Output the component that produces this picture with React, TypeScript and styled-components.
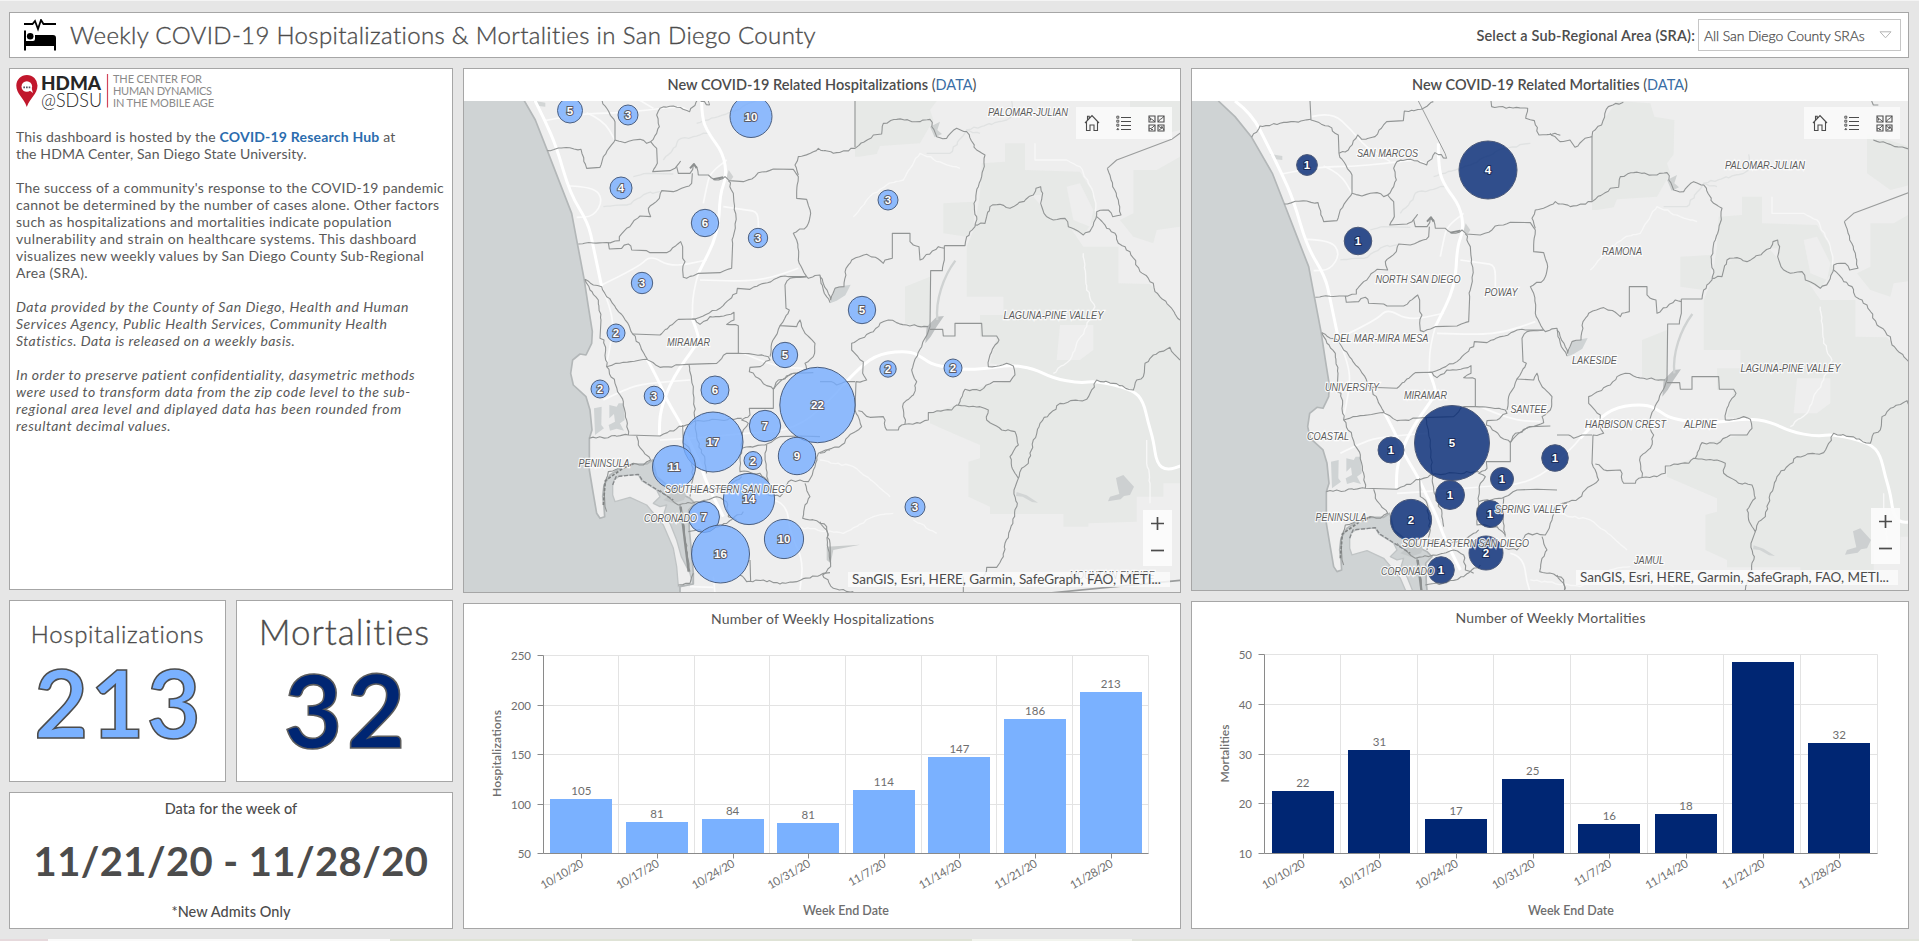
import React from "react";
import styled, { createGlobalStyle } from "styled-components";

const FONT = `Lato, "Open Sans", sans-serif`;
const BLUE = "#7ab1ff";
const NAVY = "#002673";

const Global = createGlobalStyle`
  html, body { margin: 0; padding: 0; }
  body { background: #e6e6e6; font-family: ${FONT}; color: #4c4c4c; overflow: hidden; }
  * { box-sizing: border-box; }
`;

const Page = styled.div`
  width: 1919px;
  height: 941px;
  display: flex;
  flex-direction: column;
  border-top: 1px solid #f4f4f4;
  background: #e6e6e6;
`;

const Panel = styled.section`
  background: #fff;
  border: 1px solid #a6a6a6;
`;

const Header = styled(Panel)`
  display: flex;
  align-items: center;
  height: 46px;
  margin: 11px 10px 10px 9px;
  padding: 0 7px 0 14px;
  flex: none;
`;

const Title = styled.h1`
  margin: 0 auto 0 13px;
  font-size: 24px;
  font-weight: 300;
  letter-spacing: 0.35px;
  line-height: 32px;
  padding-bottom: 1px;
  white-space: nowrap;
  -webkit-text-stroke: 0.35px currentColor;
`;

const SelectLabel = styled.label`
  font-size: 14.5px;
  font-weight: 600;
  letter-spacing: 0.16px;
  margin-right: 3px;
  white-space: nowrap;
`;

const Select = styled.div`
  width: 203px;
  height: 32px;
  border: 1px solid #c6c6c6;
  display: flex;
  align-items: center;
  justify-content: space-between;
  padding: 0 8px 0 5px;
  font-size: 14px;
  font-weight: 300;
  letter-spacing: -0.1px;
  white-space: nowrap;
  -webkit-text-stroke: 0.25px currentColor;
`;

const Body = styled.main`
  display: flex;
  gap: 10px;
  height: 861px;
  margin: 0 10px 0 9px;
  flex: none;
`;

const Column = styled.div<{ $w: number }>`
  width: ${(p) => p.$w}px;
  display: flex;
  flex-direction: column;
  gap: 10px;
`;

const About = styled(Panel)`
  height: 522px;
  padding: 4px 6px;
`;

const Paragraph = styled.p<{ $italic?: boolean }>`
  margin: 0 0 17px;
  font-size: 14px;
  font-weight: 400;
  font-style: ${(p) => (p.$italic ? "italic" : "normal")};
  color: #595959;
  line-height: 17px;
  white-space: nowrap;
`;

const Line = styled.span<{ $track: number }>`
  display: block;
  letter-spacing: ${(p) => p.$track}px;
`;

const HubLink = styled.a`
  color: #2b6cae;
  font-weight: 700;
`;

const StatRow = styled.div`
  display: flex;
  gap: 10px;
  height: 182px;
`;

const StatCard = styled(Panel)<{ $top: number }>`
  flex: 1;
  display: flex;
  flex-direction: column;
  align-items: center;
  padding-top: ${(p) => p.$top}px;
  overflow: hidden;
`;

const StatName = styled.div<{ $size: number; $track: number }>`
  font-size: ${(p) => p.$size}px;
  line-height: ${(p) => p.$size + 6}px;
  font-weight: 300;
  letter-spacing: ${(p) => p.$track}px;
  -webkit-text-stroke: 0.35px currentColor;
`;

const StatValue = styled.div<{ $size: number; $color: string; $track: number; $stroke: string }>`
  margin-top: 7px;
  font-size: ${(p) => p.$size}px;
  line-height: ${(p) => p.$size}px;
  font-weight: 700;
  color: ${(p) => p.$color};
  letter-spacing: ${(p) => p.$track}px;
  margin-right: -${(p) => p.$track}px;
  -webkit-text-stroke: 1.6px ${(p) => p.$stroke};
`;

const Week = styled(Panel)`
  height: 137px;
  display: flex;
  flex-direction: column;
  align-items: center;
  justify-content: space-between;
  padding: 6px 0 6px;
`;

const WeekNote = styled.div`
  font-size: 14.5px;
  font-weight: 500;
  line-height: 20px;
  letter-spacing: 0.06px;
`;

const WeekRange = styled.div`
  font-size: 40px;
  font-weight: 700;
  line-height: 48px;
  letter-spacing: 0.4px;
`;

const MapPanel = styled(Panel)<{ $h: number }>`
  height: ${(p) => p.$h}px;
  display: flex;
  flex-direction: column;
`;

const MapTitle = styled.h2`
  margin: 0;
  height: 32px;
  line-height: 31px;
  text-align: center;
  font-size: 14.5px;
  font-weight: 600;
  letter-spacing: 0.03px;
  flex: none;
`;

const DataLink = styled.span`
  font-weight: 400;
  a { color: #3a6ea5; }
`;

const MapView = styled.div`
  position: relative;
  flex: 1;
  overflow: hidden;
  svg { display: block; }
`;

const Tools = styled.div`
  position: absolute;
  top: 6px;
  right: 8px;
  width: 96px;
  height: 32px;
  display: flex;
  background: rgba(250, 250, 250, 0.92);
`;

const Tool = styled.button`
  width: 32px;
  height: 32px;
  border: 0;
  padding: 0;
  background: none;
  display: flex;
  align-items: center;
  justify-content: center;
`;

const ZoomBox = styled.div`
  position: absolute;
  right: 8px;
  bottom: 26px;
  width: 29px;
  height: 56px;
  padding-bottom: 2px;
  display: flex;
  flex-direction: column;
  align-items: center;
  justify-content: space-around;
  background: rgba(251, 251, 251, 0.95);
`;

const Attribution = styled.div`
  position: absolute;
  right: 10px;
  bottom: 5px;
  width: 322px;
  height: 15px;
  padding-left: 4px;
  line-height: 15px;
  font-size: 13.5px;
  letter-spacing: -0.03px;
  white-space: nowrap;
  background: rgba(250, 250, 250, 0.85);
`;

const ChartPanel = styled(Panel)`
  flex: 1;
  min-height: 0;
  svg { display: block; }
`;

const Footer = styled.footer`
  display: flex;
  height: 2px;
  margin-top: 10px;
`;

const Strip = styled.div<{ $w: number; $c: string }>`
  width: ${(p) => p.$w}px;
  background: ${(p) => p.$c};
`;

/* ---------- geography ---------- */

type Pt = [number, number];

const parse = (s: string, dx = 0, dy = 0): Pt[] =>
  s.trim().split(/\s+/).map((p) => {
    const [x, y] = p.split(",").map(Number);
    return [x + dx, y + dy] as Pt;
  });

const noise = (x: number, y: number) => {
  const v = Math.sin(x * 12.9898 + y * 78.233) * 43758.5453;
  return (v - Math.floor(v)) * 2 - 1;
};

/* Adds small survey-line irregularities; axis-aligned legs stay straight. */
const rough = (pts: Pt[], amp: number) => {
  let d = `M${pts[0][0]} ${pts[0][1]}`;
  for (let i = 1; i < pts.length; i++) {
    const [x0, y0] = pts[i - 1];
    const [x1, y1] = pts[i];
    const len = Math.hypot(x1 - x0, y1 - y0);
    const straight = Math.abs(x1 - x0) < 4 || Math.abs(y1 - y0) < 4;
    const n = straight ? 1 : Math.max(1, Math.round(len / 11));
    for (let k = 1; k < n; k++) {
      const t = k / n;
      const x = x0 + (x1 - x0) * t;
      const y = y0 + (y1 - y0) * t;
      d += `L${(x + noise(x, y) * amp).toFixed(1)} ${(y + noise(y, x) * amp).toFixed(1)}`;
    }
    d += `L${x1} ${y1}`;
  }
  return d;
};

const NW: string[] = [
  "339,-37 342,20 394,38 424,65 426,120 465,185 465,240 430,290 420,322 380,325 363,268 295,264 262,272",
  "164,72 189,38 249,30 342,18",
  "426,120 454,110 482,65 494,78 534,70 569,25 619,22 622,-7 672,-12 709,-35",
  "882,-37 884,-20 992,-15 986,15 1012,22 1026,65 1074,60 1090,66",
  "465,240 495,248 520,240 540,238 560,250 572,245 590,265 592,310 578,335 630,332 645,325 662,303",
  "650,320 655,340 690,340 700,315 710,320 715,345 745,345 765,360 795,350 808,362 850,365 885,350 895,338 940,327 1000,328 1015,350 1010,395 1010,415 1040,418 1052,460 1040,500 1000,520 1010,540 1015,600 1040,650",
  "572,245 590,220 598,200 590,165 600,145 640,138 689,155 714,118 749,135",
  "697,340 695,370 665,385 640,395 605,392 598,415 565,445 572,470 540,468 500,505 478,530 478,542 440,548 355,552",
  "445,548 448,567 485,565 505,552 515,570 560,572 570,578 620,578 662,545 668,560 668,595 675,605 668,630 670,652 680,655 715,640 780,638 815,625 818,550 828,470 820,400 805,362",
  "1015,345 1005,315 1015,290 1060,275 1075,265 1090,272",
  "697,777 705,777 780,745 830,700 832,685 870,688 950,655 975,648 985,650 1040,650",
  "375,658 400,675 425,680 440,710 490,770 518,822 562,898",
  "375,658 390,690 415,720 423,780 420,835 432,840 440,920 465,970 490,1025 500,1080 505,1125",
  "518,822 600,825 655,778 705,777 720,793 750,770 800,765 822,757 822,780 800,793 835,797 835,880",
  "1040,650 990,655 975,675 978,745 988,750 960,797 1010,800 1020,780 1030,810 1065,850 1060,890 1035,910 1040,928 990,945 965,960 940,988",
  "960,797 935,850 930,890",
  "1040,650 1045,655 1080,645 1090,690 1110,728",
];

const NE: string[] = [
  "-21,60 9,85 39,80 54,102 84,75 105,70 107,55 134,35 154,-20 199,-33",
  "105,70 105,262",
  "10,272 40,280 105,265 160,225 185,222 190,190 230,178 300,185 330,178 350,230 380,235 410,205 440,215 470,270 495,285 485,350 475,380 462,430 470,470 465,500 440,530 435,557 373,557",
  "465,495 495,490 510,440 540,433 570,445 640,405 648,385 662,380 668,400 662,430 672,460 700,480 735,475 745,500 790,525 815,505 830,465 830,455 865,450 878,470 903,465 895,420 878,380 862,325",
  "830,470 860,505 885,520 895,550 930,575 960,635 1000,670 1005,695 1050,740 1080,780",
  "373,557 373,600 367,632 332,632 330,800 318,830 275,930 290,965 280,1005 250,1030 255,1092",
  "373,565 355,560 300,600 297,560 280,555 270,545 270,520 217,520 217,595 195,600 190,610 175,597 140,583 95,600 78,625 72,680 45,685 32,720 0,650",
  "325,800 260,795 205,780 180,790 160,815 95,850 95,870 130,905 128,940 140,960 108,965 105,1050 125,1100 85,1130 65,1155 0,1180",
  "330,808 368,808 370,828 405,828 405,790 485,790 487,828 530,828 537,840 525,855 510,885 505,920 560,910 580,918 585,945 570,965 520,965 480,992 435,988 415,1035",
  "944,-37 949,-25 964,-25",
  "949,80 989,90 1014,100 1060,107",
];

const SW: string[] = [
  "440,110 490,97 560,88 600,112 680,103 770,100 800,70 835,70 925,80 930,90 900,110 870,112 868,125 940,178 940,235 868,235 870,255 845,270 865,280 850,300 845,355",
  "687,103 700,170 705,268 712,330 735,390 740,430",
  "388,325 505,315 600,318 700,275 845,265",
  "530,318 535,345 572,390 550,405 520,400 445,425 432,470 435,530 440,545",
  "668,285 670,340 690,360 700,440 690,500",
  "845,355 915,345 960,320 1020,318 1080,320",
  "920,345 915,370 925,460",
  "845,355 840,425 900,430 925,455",
  "1110,360 1075,370 1065,410 1045,455 1020,450 985,455 960,500 925,495",
  "1035,460 1050,500 1035,525 1028,565 1070,572 1100,590 1108,680 1112,700",
  "600,480 655,525 740,510 770,500 800,515 805,560 830,570",
  "660,525 690,725",
  "685,605 740,600 800,580 850,545",
  "655,765 690,760 700,730",
  "840,735 860,755 910,750 960,762 1010,755 1090,730 1110,728",
  "870,690 872,755",
  "940,178 955,150 1000,130 1060,128",
  "845,440 800,470 730,480 700,470",
];

const SE: string[] = [
  "115,242 150,262 190,260 200,300 235,300 245,285 300,280 325,270 325,248 395,240 410,225 480,230 505,240 500,270 545,300 585,305 595,345 570,380 575,410 595,445 605,415 625,400 640,330 660,280 720,220 800,208 815,180 830,150 880,160 940,180 950,150 970,140 975,100 1000,75 1050,52 1080,90",
  "595,445 582,480 592,520 570,600 555,640 550,680 530,712 500,712 490,740",
  "0,575 20,600 30,640 32,710 8,735 40,775 100,785",
  "430,740 430,790",
  "0,155 35,155 50,165 75,155 105,155",
];

const COAST =
  "64,-37 114,10 164,72 226,180 262,272 300,370 335,460 352,550 372,655 385,740 397,815 395,850 378,885 360,882 338,900 332,940 340,975 378,1010 390,1050 396,1110 388,1135 388,1230 398,1290 410,1360 420,1375 434,1370 432,1340 428,1310 432,1275 450,1245 480,1225 520,1212 560,1212 578,1200 590,1250 640,1290 690,1315 705,1330 686,1350 688,1410 695,1480 700,1540 700,1572 660,1580 660,1640";

const CORONADO =
  "458,1275 462,1260 480,1247 535,1244 545,1262 590,1290 600,1310 580,1330 600,1340 620,1335 612,1360 630,1390 650,1440 664,1490 690,1540 698,1572 655,1580 650,1520 640,1465 610,1395 560,1335 510,1312 465,1325 458,1305";

const PARKS = [
  "105,70 180,-37 280,-30 292,10 352,20 350,123 330,150 340,180 300,250 180,258 170,282 120,290 105,290",
  "485,310 555,305 555,250 615,250 615,330 780,335 820,400 830,470 790,525 745,505 672,470 662,405 640,405 570,445 510,440 495,490 465,495 480,400",
  "440,665 440,560 465,500 510,445 640,410 700,480 735,480 790,560 895,560 895,670 990,672 1080,780 1080,1270 1030,1270 1030,1310 950,1310 950,1385 805,1390 805,1400 730,1400 730,1362 510,1362 510,1340 445,1310 445,1205 480,1195 480,1155 410,1125 330,1090 330,1060 410,1035 440,990 580,960 585,920 510,910 530,830 480,830 480,765 550,765 550,710 440,710",
  "930,60 1080,107 1080,210 1000,230 930,180",
  "940,330 1010,330 1080,290 1080,500 1010,510 1000,550 940,530 900,480 940,460",
  "255,680 330,650 330,810 255,790",
  "370,430 460,425 462,500 440,530 370,520",
];

const FREEWAYS = [
  "114,-37 164,0 214,100 254,180 290,262 330,400 385,490 400,560 425,680",
  "724,90 724,170 745,220 790,280 800,350 780,400 775,520 715,640",
  "697,777 718,830 712,850 640,950 600,1050 598,1125",
  "562,898 600,970 620,1020 665,1095 690,1150 720,1210 740,1270 790,1370",
];

const ROADS = [
  "425,680 460,760 455,840 440,910",
  "425,675 540,620 570,585 635,622 740,600",
  "720,660 840,665 930,655 1015,625",
  "254,182 364,160 464,160 564,150 664,138 689,155",
  "344,10 404,-5 464,50 504,100 580,145",
  "430,1020 500,985 560,970 690,960",
  "600,1140 700,1135 850,1120 1010,1110 1130,1000 1160,960",
  "730,430 740,380 750,340 800,300",
  "380,158 430,180 465,240",
  "330,378 400,380 430,420 400,470 350,472",
  "790,440 860,450 895,455 895,520",
  "715,640 698,700 697,777",
  "940,1320 980,1330 990,1420 1030,1500 1020,1590",
  "760,1550 765,1600",
  "850,880 940,920 1030,925",
  "690,1580 760,1582",
];

const FAINT = [
  "745,220 700,230 655,240 640,265 610,300",
  "710,190 830,150 905,110 1000,90",
  "430,440 500,435 560,400 600,395",
  "520,350 560,340 640,342",
  "1400,280 1470,280 1520,210 1560,220",
  "1520,210 1640,180 1660,165 1655,123",
  "1725,250 1725,300 1820,300 1860,320 1900,400 1910,460",
  "1870,580 1880,690 1905,740 1880,800 1850,850 1830,900 1780,940",
  "1180,470 1240,400 1280,375 1330,360 1380,280 1450,310 1500,325",
  "1000,1400 1150,1420 1240,1370 1300,1360",
  "1360,1380 1430,1420",
  "1080,1200 1180,1220 1290,1310",
  "2060,1140 2060,1210 2070,1270 2070,1330",
];

const line = (pts: Pt[]) => "M" + pts.map((p) => p.join(" ")).join("L");

const curve = (pts: Pt[]) => {
  let d = `M${pts[0][0]} ${pts[0][1]}`;
  for (let i = 1; i < pts.length - 1; i++) {
    const mx = (pts[i][0] + pts[i + 1][0]) / 2;
    const my = (pts[i][1] + pts[i + 1][1]) / 2;
    d += `Q${pts[i][0]} ${pts[i][1]} ${mx} ${my}`;
  }
  const l = pts[pts.length - 1];
  return d + `L${l[0]} ${l[1]}`;
};

const borders = [
  ...NW.map((s) => parse(s)),
  ...NE.map((s) => parse(s, 1080, 0)),
  ...SW.map((s) => parse(s, 0, 810)),
  ...SE.map((s) => parse(s, 1080, 810)),
].map((p) => rough(p, 3.2));

function Geography() {
  return (
    <g transform="translate(460 60) scale(0.33333)" fill="none" strokeLinejoin="round">
      <path d={line(parse(COAST)) + "L2400 1640L2400 -120L20 -120Z"} fill="#eeeeee" />
      {PARKS.map((s, i) => (
        <path key={i} d={line(parse(s, 1080, 0)) + "Z"} fill="#e7e9e7" />
      ))}
      <path d={line(parse("1800,795 1900,795 1900,870 1860,900 1790,900")) + "Z"} fill="#eeeeee" />
      <path d={line(parse("1820,380 1860,370 1900,450 1890,500 1840,480")) + "Z"} fill="#eeeeee" />
      <path d={line(parse(CORONADO)) + "Z"} fill="#eeeeee" stroke="#c0c4c5" strokeWidth={4} />
      <path d={line(parse(COAST))} stroke="#b3b7b8" strokeWidth={5} />
      <path d={line(parse("402,1045 425,1040 424,1095 432,1105 405,1125")) + "Z"} fill="#cfd3d4" />
      <path
        d="M448 1035L470 1040L476 1030L492 1030L494 1080L480 1090L492 1112L470 1106L450 1112L446 1095L465 1085L462 1062L448 1075Z"
        fill="#cfd3d4"
      />
      <path d="M1968 1254L1990 1245L2022 1280L2010 1305L1992 1308L1982 1318L1944 1324L1950 1310L1978 1302L1972 1275Z" fill="#cdd0d1" />
      <path d="M1670 1296L1700 1306L1734 1328L1716 1326L1688 1310L1668 1308Z" fill="#d2d5d5" />
      <path d="M1110 730L1126 682L1172 674L1156 706L1130 722Z" fill="#cfd3d4" />
      <path d="M1396 850L1400 800L1430 770L1452 768L1430 800L1412 830Z" fill="#bfc2c3" />
      <path d="M1410 200L1440 185L1432 210L1446 222L1424 232Z" fill="#cfd2d2" />
      <path d="M1100 1460L1200 1454L1120 1470L1112 1510L1100 1500Z" fill="#c9cccc" />
      <path d="M655 1285L680 1300L672 1320L640 1330L610 1320Z" fill="#c4c8c9" />
      <path d="M218 122L256 128L256 140L236 138Z" fill="#d2d5d5" />
      <path d="M806 330L820 350L812 362L800 352Z" fill="#d0d2d2" />
      <path d="M1432 780C1426 720 1450 650 1486 602" stroke="#cfd2d2" strokeWidth={7} />
      {FAINT.map((s, i) => (
        <path key={i} d={rough(parse(s), 3)} stroke={i < 6 ? "#e0e2e2" : "#f7f7f7"} strokeWidth={4} />
      ))}
      {ROADS.map((s, i) => (
        <path key={i} d={curve(parse(s))} stroke="#fafafa" strokeWidth={5} />
      ))}
      {FREEWAYS.map((s, i) => (
        <path key={i} d={curve(parse(s))} stroke="#ffffff" strokeWidth={9} />
      ))}
      <path
        d={curve(
          parse(
            "1150,975 1200,920 1260,880 1350,872 1390,895 1420,915 1510,930 1580,925 1650,915 1720,925 1780,955 1860,970 1910,962 2020,990 2050,1025 2065,1090 2080,1140 2090,1210 2120,1232 2170,1215"
          )
        )}
        stroke="#ffffff"
        strokeWidth={9}
      />
      {borders.map((d, i) => (
        <path key={i} d={d} stroke="#929595" strokeWidth={3.3} />
      ))}
      <path d="M664 -37L744 120L749 135" stroke="#9a9c9c" strokeWidth={3} />
      <path d="M1942 325L1970 300L2135 238L2180 205" stroke="#9a9c9c" strokeWidth={3.4} />
      <path d="M690 325L702 312L710 325M760 358L790 352" stroke="#8d9090" strokeWidth={6} />
      <path d="M662 1340L686 1535" stroke="#8b8e8e" strokeWidth={7} />
      <path d="M430 1335L436 1262L490 1224L520 1212" stroke="#7f8282" strokeWidth={5} strokeDasharray="9 5" />
      <path d="M458 1275L468 1250L535 1243L548 1262L640 1320" stroke="#85888a" strokeWidth={4} strokeDasharray="12 5" />
      <path d="M1760 1600L2170 1560" stroke="#9a9c9c" strokeWidth={5} />
    </g>
  );
}

type Bubble = [number, number, number, number];
type Label = [string, number, number, number];

const HOSP: Bubble[] = [
  [570, 110.5, 12.5, 5], [628, 115, 10, 3], [751, 116.5, 21, 10], [621, 188, 11, 4], [705, 223, 13.7, 6],
  [758, 238, 9.7, 3], [642, 283, 10.7, 3], [616, 333, 9, 2], [888, 200, 10, 3], [862, 310, 13.7, 5],
  [600, 389, 9, 2], [654, 396, 9.8, 3], [715, 390, 14, 6], [785, 355, 12.7, 5], [817.5, 405, 37.7, 22],
  [713, 442, 30, 17], [765, 426, 15.7, 7], [797, 456, 18.7, 9], [753, 460.5, 9, 2], [674, 467, 21.5, 11],
  [749, 499, 25.6, 14], [704, 517, 15.5, 7], [720.5, 554, 29, 16], [784, 539, 19.6, 10], [888, 369, 8.2, 2],
  [953, 368, 9, 2], [915, 507, 10, 3],
];

const MORT: Bubble[] = [
  [1307, 165, 10.4, 1], [1488, 170, 29, 4], [1358, 241, 13.8, 1], [1391, 450, 13, 1], [1452, 443, 37.5, 5],
  [1450, 495, 14.5, 1], [1502, 479, 11.5, 1], [1490, 514, 13.5, 1], [1411, 520, 20.6, 2], [1486, 553, 17, 2],
  [1441, 570, 13.3, 1], [1555, 458, 13.3, 1],
];

const HOSP_LABELS: Label[] = [
  ["PALOMAR-JULIAN", 1028, 112, 80], ["LAGUNA-PINE VALLEY", 1053.5, 315, 100], ["MIRAMAR", 688.5, 342, 43],
  ["PENINSULA", 604, 463, 51], ["SOUTHEASTERN SAN DIEGO", 728.5, 489, 127], ["CORONADO", 670.5, 518, 53],
  ["MOUNTAIN EMPIRE", 1112, 575, 85],
];

const MORT_LABELS: Label[] = [
  ["SAN MARCOS", 1387.5, 153, 61], ["NORTH SAN DIEGO", 1418, 279, 85], ["POWAY", 1501, 292, 33],
  ["DEL MAR-MIRA MESA", 1381, 338, 95], ["UNIVERSITY", 1352, 387, 54], ["MIRAMAR", 1425.5, 395.5, 43],
  ["SANTEE", 1528.5, 409, 36], ["COASTAL", 1328, 436, 42], ["PENINSULA", 1341, 517, 51],
  ["SPRING VALLEY", 1531, 509, 72], ["SOUTHEASTERN SAN DIEGO", 1465.5, 543, 127], ["CORONADO", 1407.5, 571, 53],
  ["PALOMAR-JULIAN", 1765, 165, 80], ["RAMONA", 1622, 251, 40], ["LAKESIDE", 1594.5, 360, 45],
  ["LAGUNA-PINE VALLEY", 1790.5, 368, 100], ["HARBISON CREST", 1625.5, 424, 81], ["ALPINE", 1700.5, 424, 33],
  ["JAMUL", 1649, 560, 30],
];

const Place = styled.text`
  font: italic 10.67px "Liberation Sans", Arial, sans-serif;
  fill: #5c5c5c;
  stroke: rgba(255, 255, 255, 0.85);
  stroke-width: 2.4px;
  paint-order: stroke;
  text-anchor: middle;
`;

const Count = styled.text<{ $halo: string }>`
  font: bold 11.5px "Liberation Sans", Arial, sans-serif;
  fill: #fff;
  stroke: ${(p) => p.$halo};
  stroke-width: 2px;
  paint-order: stroke;
  text-anchor: middle;
`;

interface MapProps {
  h: number;
  left: number;
  shift: Pt;
  bubbles: Bubble[];
  labels: Label[];
  fill: string;
  stroke: string;
  halo: string;
}

const HomeIcon = () => (
  <svg width="16" height="18" viewBox="0 0 16 18" fill="none" stroke="#4c4c4c" strokeWidth="1.1">
    <path d="M1 9L8 1.6L15 9M2.5 8V16.5H6V11H10V16.5H13.5V8M3.5 6V2.2H5.2V4.3" />
  </svg>
);

const LegendIcon = () => (
  <svg width="16" height="16" viewBox="0 0 16 16" fill="none" stroke="#4c4c4c">
    <path d="M5 2.5H15M5 6.5H15M5 10.5H15M5 14.5H15" strokeWidth="1.1" />
    <path d="M.8 1.2h2v2h-2zM.8 5.2h2v2h-2zM.8 9.2h2v2h-2zM.8 14.6h2L1.8 13.2z" strokeWidth=".9" />
  </svg>
);

const BasemapIcon = () => (
  <svg width="17" height="17" viewBox="0 0 17 17" fill="none" stroke="#4c4c4c" strokeWidth="1.1">
    <path d="M1 1h6v6H1zM10 1h6v6h-6zM1 10h6v6H1zM10 10h6v6h-6z" />
    <path d="M1 2l3 2.500l1 .5l2 2M2.500 5.500v-2M16 1l-2 2.500l-1.500 .5L10 7M1 14l3-1l3-3M3 14.500h2M10 10l2 2.500l2-.5l2 3M14 11v2l-3 2" strokeWidth=".9" />
  </svg>
);

function CountyMap({ h, left, shift, bubbles, labels, fill, stroke, halo }: MapProps) {
  return (
    <MapView>
      <svg width="716" height={h} viewBox={`${left} 101 716 ${h}`}>
        <rect x={left} y="101" width="716" height={h} fill="#cfd3d4" />
        <g transform={`translate(${shift[0]} ${shift[1]})`}>
          <Geography />
        </g>
        {bubbles.map(([x, y, r], i) => (
          <circle key={i} cx={x} cy={y} r={r} fill={fill} fillOpacity={0.8} stroke={stroke} strokeWidth={1} />
        ))}
        {labels.map(([t, x, y, w], i) => (
          <Place key={i} x={x} y={y + 3.8} textLength={w} lengthAdjust="spacingAndGlyphs">{t}</Place>
        ))}
        {bubbles.map(([x, y, , n], i) => (
          <Count key={i} x={x} y={y + 4} $halo={halo}>{n}</Count>
        ))}
      </svg>
      <Tools>
        <Tool><HomeIcon /></Tool>
        <Tool><LegendIcon /></Tool>
        <Tool><BasemapIcon /></Tool>
      </Tools>
      <ZoomBox>
        <svg width="13" height="13" viewBox="0 0 13 13" stroke="#4c4c4c" strokeWidth="1.7"><path d="M0 6.500H13M6.500 0V13" /></svg>
        <svg width="13" height="13" viewBox="0 0 13 13" stroke="#4c4c4c" strokeWidth="1.7"><path d="M0 6.500H13" /></svg>
      </ZoomBox>
      <Attribution>SanGIS, Esri, HERE, Garmin, SafeGraph, FAO, METI...</Attribution>
    </MapView>
  );
}

/* ---------- charts ---------- */

const WEEKS = ["10/10/20", "10/17/20", "10/24/20", "10/31/20", "11/7/20", "11/14/20", "11/21/20", "11/28/20"];

const Txt = styled.text<{ $s: number; $w?: number; $c?: string }>`
  font-family: ${FONT};
  font-size: ${(p) => p.$s}px;
  font-weight: ${(p) => p.$w ?? 400};
  fill: ${(p) => p.$c ?? "#6e6e6e"};
`;

interface ChartProps {
  title: string;
  titleY: number;
  titleW: number;
  axis: string;
  axisX: number;
  axisW: number;
  left: number;
  top: number;
  h: number;
  x0: number;
  x1: number;
  y0: number;
  ticks: number[];
  data: { v: number; top: number; label?: boolean }[];
  color: string;
}

function BarChart(p: ChartProps) {
  const base = 853.5;
  const cell = (p.x1 - p.x0) / 8;
  const ty = (i: number) => Math.floor(base - ((base - p.y0) * i) / (p.ticks.length - 1)) + 0.5;
  return (
    <svg width="716" height={p.h} viewBox={`${p.left} ${p.top} 716 ${p.h}`}>
      <Txt $s={14} $c="#555" x={p.left + 358.5} y={p.titleY} textAnchor="middle" textLength={p.titleW}>{p.title}</Txt>
      {p.ticks.map((t, i) => (
        <g key={t}>
          <path d={`M${p.x0} ${ty(i)}H${p.x1}`} stroke="#e3e3e3" />
          <path d={`M${p.x0 - 6} ${ty(i)}H${p.x0}`} stroke="#8a8a8a" />
          <Txt $s={11.5} x={p.x0 - 12.5} y={ty(i) + 4} textAnchor="end">{t}</Txt>
        </g>
      ))}
      {WEEKS.map((w, i) => {
        const d = p.data[i];
        const cx = p.x0 + cell * (i + 0.5);
        const gx = Math.round(p.x0 + cell * (i + 1)) - 0.5;
        return (
          <g key={w}>
            <path d={`M${gx} ${p.y0}V${base}`} stroke="#e3e3e3" />
            <rect x={Math.round(cx - 31)} y={d.top} width={62} height={base - d.top} fill={p.color} />
            {d.label !== false && (
              <Txt $s={11.5} x={cx} y={d.top - 4} textAnchor="middle">{d.v}</Txt>
            )}
            <path d={`M${Math.round(cx) + 0.5} ${base}v5`} stroke="#8a8a8a" />
            <Txt $s={11.5} textAnchor="end" transform={`translate(${cx + 3} 866) rotate(-30)`} textLength={w.length > 7 ? 47 : 41}>{w}</Txt>
          </g>
        );
      })}
      <path d={`M${p.x0} ${p.y0}V${base}H${p.x1}`} fill="none" stroke="#8a8a8a" />
      <Txt $s={12} $w={600} textAnchor="middle" transform={`translate(${p.axisX} 753.5) rotate(-90)`} textLength={p.axisW}>{p.axis}</Txt>
      <Txt $s={12.5} $w={600} x={(p.x0 + p.x1) / 2} y={915} textAnchor="middle" textLength={86}>Week End Date</Txt>
    </svg>
  );
}

const BedIcon = () => (
  <svg width="33" height="32" viewBox="0 0 33 32">
    <path d="M0 5H8.500L11 2L14 10L17 1L19.500 5H32" fill="none" stroke="#000" strokeWidth="1.800" />
    <path d="M0 11.500H2V23H30V22H32V31.500H30V27H2V31.500H0ZM11 16H29Q32 16 32 19V24H2V22H9Q11 22 11 20Z" fill="#000" />
    <circle cx="6.200" cy="17.200" r="3.300" fill="#000" />
  </svg>
);

const Logo = styled.svg`
  display: block;
  margin-bottom: 17px;
`;

function HdmaLogo() {
  return (
    <Logo width="204" height="38" viewBox="16 73 204 38">
      <path d="M26.800 107C24 98 16.300 94 16.300 85.500A10.600 10.600 0 0 1 37.500 85.500C37.500 94 30 98 26.800 107Z" fill="#c1172c" />
      <circle cx="26.800" cy="86.500" r="5.300" fill="#fff" />
      <path d="M29 90L33 93L31.500 88Z" fill="#fff" />
      <path d="M23.300 87.300H30.300" stroke="#556" strokeWidth="1.800" strokeDasharray="1.700 1" />
      <Txt $s={18.5} $w={900} $c="#262626" x="41" y="89.500" textLength="60" lengthAdjust="spacingAndGlyphs">HDMA</Txt>
      <Txt $s={19} $w={300} $c="#222" x="41" y="107" textLength="61" lengthAdjust="spacingAndGlyphs">@SDSU</Txt>
      <path d="M107.500 74V107.500" stroke="#d3455a" strokeWidth="1.200" />
      <Txt $s={11} $c="#8a8a8a" x="113" y="82.700" textLength="89">THE CENTER FOR</Txt>
      <Txt $s={11} $c="#8a8a8a" x="113" y="95" textLength="99">HUMAN DYNAMICS</Txt>
      <Txt $s={11} $c="#8a8a8a" x="113" y="107.300" textLength="101">IN THE MOBILE AGE</Txt>
    </Logo>
  );
}

export default function App() {
  return (
    <Page>
      <Global />
      <Header>
        <BedIcon />
        <Title>Weekly COVID-19 Hospitalizations &amp; Mortalities in San Diego County</Title>
        <SelectLabel>Select a Sub-Regional Area (SRA):</SelectLabel>
        <Select>
          All San Diego County SRAs
          <svg width="13" height="8" viewBox="0 0 13 8"><path d="M1 .8H12L6.500 6.800Z" fill="none" stroke="#b5b5b5" /></svg>
        </Select>
      </Header>
      <Body>
        <Column $w={444}>
          <About>
            <HdmaLogo />
            <Paragraph>
              <Line $track={0.2}>This dashboard is hosted by the <HubLink>COVID-19 Research Hub</HubLink> at</Line>
              <Line $track={0.13}>the HDMA Center, San Diego State University.</Line>
            </Paragraph>
            <Paragraph>
              <Line $track={0.25}>The success of a community's response to the COVID-19 pandemic</Line>
              <Line $track={0.26}>cannot be determined by the number of cases alone. Other factors</Line>
              <Line $track={0.27}>such as hospitalizations and mortalities indicate population</Line>
              <Line $track={0.36}>vulnerability and strain on healthcare systems. This dashboard</Line>
              <Line $track={0.27}>visualizes new weekly values by San Diego County Sub-Regional</Line>
              <Line $track={0.27}>Area (SRA).</Line>
            </Paragraph>
            <Paragraph $italic>
              <Line $track={0.56}>Data provided by the County of San Diego, Health and Human</Line>
              <Line $track={0.51}>Services Agency, Public Health Services, Community Health</Line>
              <Line $track={0.45}>Statistics. Data is released on a weekly basis.</Line>
            </Paragraph>
            <Paragraph $italic>
              <Line $track={0.5}>In order to preserve patient confidentiality, dasymetric methods</Line>
              <Line $track={0.51}>were used to transform data from the zip code level to the sub-</Line>
              <Line $track={0.63}>regional area level and diplayed data has been rounded from</Line>
              <Line $track={0.5}>resultant decimal values.</Line>
            </Paragraph>
          </About>
          <StatRow>
            <StatCard $top={18}>
              <StatName $size={24} $track={0.65}>Hospitalizations</StatName>
              <StatValue $size={93} $track={2.3} $color={BLUE} $stroke="#4c4c4c">213</StatValue>
            </StatCard>
            <StatCard $top={10}>
              <StatName $size={35} $track={1}>Mortalities</StatName>
              <StatValue $size={101} $track={4.5} $color={NAVY} $stroke="#5c5c5c">32</StatValue>
            </StatCard>
          </StatRow>
          <Week>
            <WeekNote>Data for the week of</WeekNote>
            <WeekRange>11/21/20 - 11/28/20</WeekRange>
            <WeekNote>*New Admits Only</WeekNote>
          </Week>
        </Column>
        <Column $w={718}>
          <MapPanel $h={525}>
            <MapTitle>New COVID-19 Related Hospitalizations <DataLink>(<a>DATA</a>)</DataLink></MapTitle>
            <CountyMap h={491} left={464} shift={[0, 0]} bubbles={HOSP} labels={HOSP_LABELS} fill="#75acff" stroke="#4b5f80" halo="#5b5b66" />
          </MapPanel>
          <ChartPanel>
            <BarChart
              title="Number of Weekly Hospitalizations" titleY={624} titleW={223}
              axis="Hospitalizations" axisX={501} axisW={87}
              left={464} top={604} h={324} x0={543.5} x1={1148.5} y0={655.5}
              ticks={[50, 100, 150, 200, 250]} color={BLUE}
              data={[
                { v: 105, top: 799 }, { v: 81, top: 822 }, { v: 84, top: 819 }, { v: 81, top: 823 },
                { v: 114, top: 790 }, { v: 147, top: 757 }, { v: 186, top: 719 }, { v: 213, top: 692 },
              ]}
            />
          </ChartPanel>
        </Column>
        <Column $w={718}>
          <MapPanel $h={523}>
            <MapTitle>New COVID-19 Related Mortalities <DataLink>(<a>DATA</a>)</DataLink></MapTitle>
            <CountyMap h={489} left={1192} shift={[737, 53.3]} bubbles={MORT} labels={MORT_LABELS} fill={NAVY} stroke="#4a5878" halo="#1b2c58" />
          </MapPanel>
          <ChartPanel>
            <BarChart
              title="Number of Weekly Mortalities" titleY={623} titleW={190}
              axis="Mortalities" axisX={1229} axisW={58}
              left={1192} top={602} h={326} x0={1264.5} x1={1877.5} y0={654.5}
              ticks={[10, 20, 30, 40, 50]} color={NAVY}
              data={[
                { v: 22, top: 791 }, { v: 31, top: 750 }, { v: 17, top: 819 }, { v: 25, top: 779 },
                { v: 16, top: 824 }, { v: 18, top: 814 }, { v: 48, top: 662, label: false }, { v: 32, top: 743 },
              ]}
            />
          </ChartPanel>
        </Column>
      </Body>
      <Footer>
        <Strip $w={48} $c="#e6d9dc" />
        <Strip $w={342} $c="#fafafa" />
        <Strip $w={582} $c="#dfe3d6" />
        <Strip $w={160} $c="#f2f4ee" />
        <Strip $w={787} $c="#e0e3da" />
      </Footer>
    </Page>
  );
}
